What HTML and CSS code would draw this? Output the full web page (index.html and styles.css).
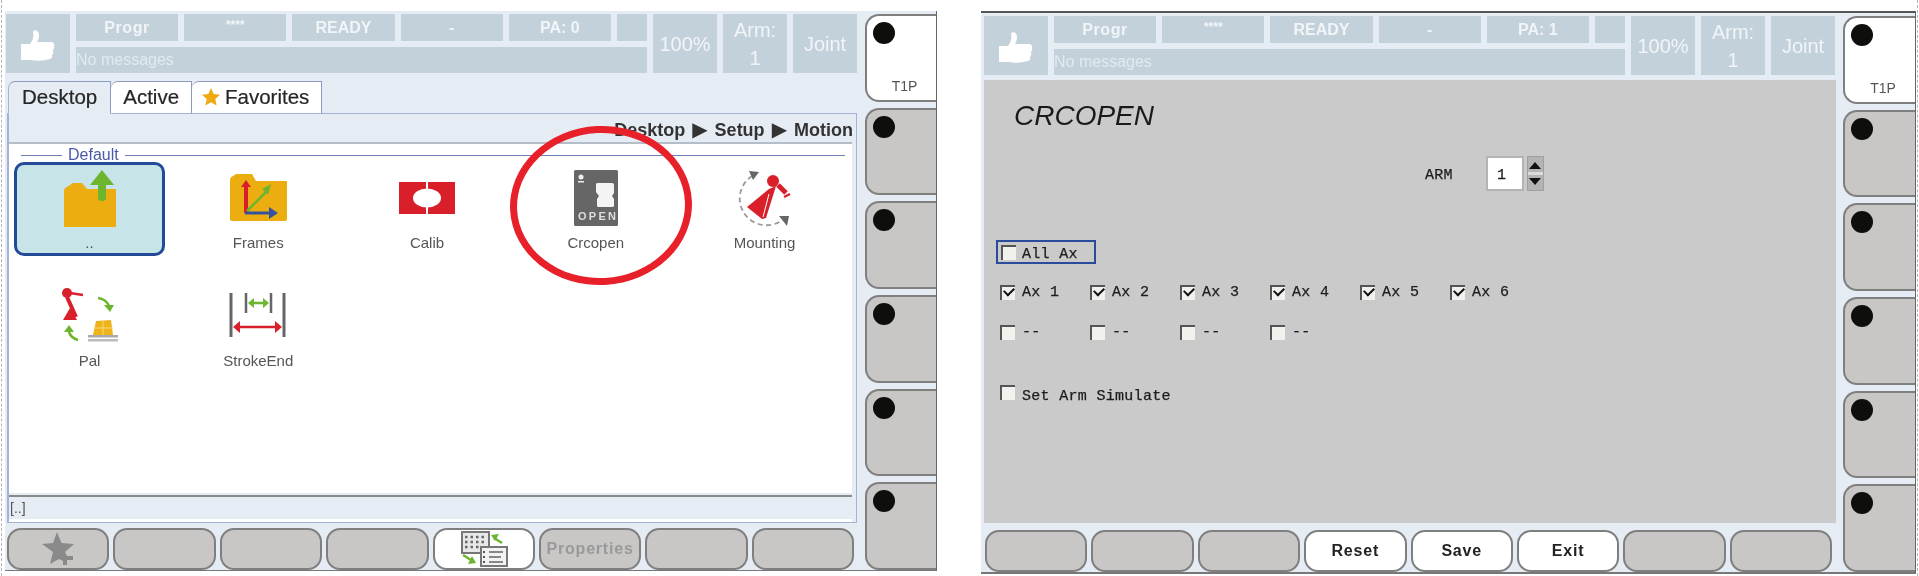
FILE: index.html
```html
<!DOCTYPE html>
<html lang="en">
<head>
  <meta charset="UTF-8" />
  <meta name="viewport" content="width=device-width, initial-scale=1" />
  <title>Teach pendant screens</title>
  <link rel="stylesheet" href="styles.css">
</head>
<body>

  <!-- desktop screen -->
  <div class="panel panel-desktop">
    <div class="main">
      <div class="status">
        <div class="cell thumb">
          <svg width="34" height="32" viewBox="0 0 34 32"><path fill="#fff" d="M0 14H9C12 10 13 6 12 2C13-1 18 0 18 5C18 8 17 10 16 12H31Q34 13 33 16Q34 18 32 20Q33 23 31 25Q32 28 29 29Q20 32 10 30H0Z"/></svg>
        </div>
        <div class="status-mid">
          <div class="cell small spaced">Progr</div>
          <div class="cell small stars">****</div>
          <div class="cell small">READY</div>
          <div class="cell small">-</div>
          <div class="cell small">PA: 0</div>
          <div class="cell small"></div>
          <div class="cell message">No messages</div>
        </div>
        <div class="cell big">100%</div>
        <div class="cell big">Arm:<br>1</div>
        <div class="cell big">Joint</div>
      </div>

      <div class="tabs">
        <div class="tab tab-current">Desktop</div>
        <div class="tab">Active</div>
        <div class="tab tab-fav">
          <svg width="18" height="18" viewBox="0 0 18 18"><path fill="#efaa12" d="M9 0l2.7 6 6.3.7-4.7 4.3 1.3 6.5L9 14.2l-5.6 3.3L4.700 11 0 6.700 6.300 6z"/></svg>
          Favorites
        </div>
      </div>

      <div class="folder">
        <div class="crumb">Desktop <span class="crumb-sep">▶</span> Setup <span class="crumb-sep">▶</span> Motion</div>
        <div class="list">
          <div class="group-head"><span class="group-line short"></span><span>Default</span><span class="group-line"></span></div>
          <div class="icons">
            <div class="item item-selected">
              <svg width="60" height="60" viewBox="0 0 60 60">
                <path fill="#ebad10" d="M4 22Q4 19 7 18L13 14H22L27 20H56V58H4Z"/>
                <path fill="#6db52e" d="M42 1L54 16H46V29Q46 32 42 32Q38 32 38 29V16H30Z"/>
              </svg>
              <span>..</span>
            </div>
            <div class="item">
              <svg width="60" height="60" viewBox="0 0 60 60">
                <path fill="#ebad10" d="M2 11Q2 8 5 7L8 5H24L28 12H59V50Q59 52 57 52H4Q2 52 2 50Z"/>
                <path fill="#d9202a" d="M16 44V18H13L18 11L23 18H20V44Z"/>
                <path stroke="#6db52e" stroke-width="2.500" d="M19 42L38 23"/>
                <path fill="#6db52e" d="M34 20L43 15L40 26Z"/>
                <path stroke="#34539f" stroke-width="3" d="M17 44H42"/>
                <path fill="#34539f" d="M41 38L50 44L41 50Z"/>
              </svg>
              <span>Frames</span>
            </div>
            <div class="item">
              <svg width="60" height="60" viewBox="0 0 60 60">
                <rect x="2" y="13" width="56" height="32" fill="#d91f2a"/>
                <ellipse cx="30" cy="29" rx="14" ry="9.500" fill="#fff"/>
                <rect x="29" y="13" width="2" height="32" fill="#fff"/>
              </svg>
              <span>Calib</span>
            </div>
            <div class="item">
              <svg width="60" height="60" viewBox="0 0 60 60">
                <rect x="8" y="1" width="44" height="56" rx="1.500" fill="#666"/>
                <circle cx="15" cy="8" r="2.500" fill="#eee"/>
                <rect x="12" y="12" width="6" height="1.500" fill="#eee"/>
                <path fill="#f4f4f4" d="M30 15Q30 14 32 14H46Q48 14 48 16V24L46 27L48 30V37Q48 38 46 38H33Q31 38 31 37V30L33 27L30 23Z"/>
                <text x="12" y="51" textLength="38" class="open-label">OPEN</text>
              </svg>
              <span>Crcopen</span>
            </div>
            <div class="item">
              <svg width="60" height="60" viewBox="0 0 60 60">
                <path fill="none" stroke="#999" stroke-width="1.800" stroke-dasharray="5 3.500" d="M17 7A25 25 0 0 0 46 52"/>
                <path fill="#666" d="M14 2L24 3L18 11Z"/>
                <path fill="#666" d="M44 47L54 47L52 57Z"/>
                <path fill="#d91f2a" d="M34 20L12 38L27 50L31 49L41 17Z"/>
                <path stroke="#fff" stroke-width="1" d="M34 25L28 48"/>
                <circle cx="38" cy="12" r="6" fill="#d91f2a"/>
                <path stroke="#d91f2a" stroke-width="5" d="M43 16L51 24"/>
                <path stroke="#d91f2a" stroke-width="2" d="M49 28L55 25"/>
              </svg>
              <span>Mounting</span>
            </div>
            <div class="item">
              <svg width="60" height="60" viewBox="0 0 60 60">
                <g transform="translate(0 -2)">
                  <circle cx="7" cy="8" r="5" fill="#d91f2a"/>
                  <path stroke="#d91f2a" stroke-width="2.500" d="M10 8L23 10"/>
                  <path stroke="#d91f2a" stroke-width="4" d="M7 12L16 32"/>
                  <path fill="#d91f2a" d="M3 35H17L10 23Z"/>
                  <path fill="none" stroke="#6db52e" stroke-width="2.500" d="M38 13Q46 14 49 21"/>
                  <path fill="#6db52e" d="M44 20L54 20L50 27Z"/>
                  <path fill="none" stroke="#6db52e" stroke-width="2.500" d="M18 55Q11 53 9 47"/>
                  <path fill="#6db52e" d="M4 47L9 40L14 47Z"/>
                  <path fill="#eeb31a" d="M36 36L51 35L53 50H33Z"/>
                  <path stroke="#f7d97a" stroke-width="1" d="M34 43H53M43 35V50"/>
                  <rect x="28" y="50" width="30" height="2.500" fill="#aaa"/>
                  <rect x="28" y="54" width="30" height="2.500" fill="#bbb"/>
                </g>
              </svg>
              <span>Pal</span>
            </div>
            <div class="item">
              <svg width="60" height="60" viewBox="0 0 60 60">
                <g transform="translate(0 -2)">
                  <path stroke="#666" stroke-width="3" d="M3 8V52M56 8V52"/>
                  <path stroke="#666" stroke-width="2.500" d="M18 8V28M43 8V28"/>
                  <path stroke="#6db52e" stroke-width="2.500" d="M23 18H38"/>
                  <path fill="#6db52e" d="M20 18L26 13V23ZM41 18L35 13V23Z"/>
                  <path stroke="#d91f2a" stroke-width="2.500" d="M9 42H50"/>
                  <path fill="#d91f2a" d="M5 42L12 36V48ZM54 42L47 36V48Z"/>
                </g>
              </svg>
              <span>StrokeEnd</span>
            </div>
          </div>
        </div>
        <div class="folder-foot">[..]</div>
      </div>

      <div class="softkeys softkeys-desktop">
        <div class="key">
          <svg width="34" height="34" viewBox="0 0 34 34"><path fill="#8a8a8a" d="M16 0l4.500 11L33 12l-9 8 2 4h6v4h-6v5h-4v-4l-4-2-9 5 3-12L1 12l11-1z"/></svg>
        </div>
        <div class="key"></div>
        <div class="key"></div>
        <div class="key"></div>
        <div class="key key-on">
          <svg width="50" height="40" viewBox="0 0 50 40">
            <rect x="3" y="3" width="27" height="21" fill="#e8e8e8" stroke="#777" stroke-width="2"/>
            <path stroke="#666" stroke-width="2.500" stroke-dasharray="2.500 3" d="M6 8H28M6 13H28M6 18H20"/>
            <rect x="22" y="18" width="26" height="19" fill="#f2f2f2" stroke="#777" stroke-width="2"/>
            <path stroke="#666" stroke-width="1.500" d="M30 23H44M30 28H42M30 33H44"/>
            <path stroke="#555" stroke-width="2" stroke-dasharray="2 3" d="M25 22V36"/>
            <path stroke="#6db52e" stroke-width="2.500" fill="none" d="M43 14L35 9"/>
            <path fill="#6db52e" d="M32 6L40 5L36 12Z"/>
            <path stroke="#6db52e" stroke-width="2.500" fill="none" d="M4 26L12 31"/>
            <path fill="#6db52e" d="M17 34L9 35L13 27Z"/>
          </svg>
        </div>
        <div class="key key-dim">Properties</div>
        <div class="key"></div>
        <div class="key"></div>
      </div>
    </div>

    <div class="side">
      <div class="side-key side-on"><span class="lamp"></span><span class="side-text">T1P</span></div>
      <div class="side-key"><span class="lamp"></span></div>
      <div class="side-key"><span class="lamp"></span></div>
      <div class="side-key"><span class="lamp"></span></div>
      <div class="side-key"><span class="lamp"></span></div>
      <div class="side-key"><span class="lamp"></span></div>
    </div>

    <div class="ring"></div>
  </div>

  <!-- crcopen screen -->
  <div class="panel panel-form">
    <div class="main">
      <div class="status">
        <div class="cell thumb">
          <svg width="34" height="32" viewBox="0 0 34 32"><path fill="#fff" d="M0 14H9C12 10 13 6 12 2C13-1 18 0 18 5C18 8 17 10 16 12H31Q34 13 33 16Q34 18 32 20Q33 23 31 25Q32 28 29 29Q20 32 10 30H0Z"/></svg>
        </div>
        <div class="status-mid">
          <div class="cell small spaced">Progr</div>
          <div class="cell small stars">****</div>
          <div class="cell small">READY</div>
          <div class="cell small">-</div>
          <div class="cell small">PA: 1</div>
          <div class="cell small"></div>
          <div class="cell message">No messages</div>
        </div>
        <div class="cell big">100%</div>
        <div class="cell big">Arm:<br>1</div>
        <div class="cell big">Joint</div>
      </div>

      <div class="form">
        <h1>CRCOPEN</h1>
        <div class="arm-row">
          <span class="arm-label">ARM</span>
          <div class="spin-value">1</div>
          <div class="spin">
            <span class="spin-up"></span>
            <span class="spin-line"></span>
            <span class="spin-down"></span>
          </div>
        </div>
        <div class="all-ax"><span class="box"></span><span class="all-ax-text">All Ax</span></div>
        <div class="axes">
          <div class="axis"><span class="box box-on"></span>Ax 1</div>
          <div class="axis"><span class="box box-on"></span>Ax 2</div>
          <div class="axis"><span class="box box-on"></span>Ax 3</div>
          <div class="axis"><span class="box box-on"></span>Ax 4</div>
          <div class="axis"><span class="box box-on"></span>Ax 5</div>
          <div class="axis"><span class="box box-on"></span>Ax 6</div>
          <div class="axis"><span class="box"></span>--</div>
          <div class="axis"><span class="box"></span>--</div>
          <div class="axis"><span class="box"></span>--</div>
          <div class="axis"><span class="box"></span>--</div>
        </div>
        <div class="simulate"><span class="box"></span><span class="simulate-text">Set Arm Simulate</span></div>
      </div>

      <div class="softkeys softkeys-form">
        <div class="key"></div>
        <div class="key"></div>
        <div class="key"></div>
        <div class="key key-on">Reset</div>
        <div class="key key-on">Save</div>
        <div class="key key-on">Exit</div>
        <div class="key"></div>
        <div class="key"></div>
      </div>
    </div>

    <div class="side">
      <div class="side-key side-on"><span class="lamp"></span><span class="side-text">T1P</span></div>
      <div class="side-key"><span class="lamp"></span></div>
      <div class="side-key"><span class="lamp"></span></div>
      <div class="side-key"><span class="lamp"></span></div>
      <div class="side-key"><span class="lamp"></span></div>
      <div class="side-key"><span class="lamp"></span></div>
    </div>
  </div>

</body>
</html>
```

FILE: styles.css
```css
* {
  box-sizing: border-box;
}

html {
  background: #fff;
}

body {
  margin: 0 1px;
  height: 576px;
  overflow: hidden;
  padding: 11px 1px 0 3px;
  display: flex;
  justify-content: space-between;
  align-items: flex-start;
  border-left: 1px dashed #b5b5b5;
  border-right: 1px dashed #b5b5b5;
  font-family: "Liberation Sans", Arial, sans-serif;
  background: #fff;
}

.panel {
  position: relative;
  display: grid;
  background: #e6ecf4;
  filter: blur(0.45px);
}

.panel-desktop {
  width: 932px;
  height: 560px;
  padding: 3px 0 0 1px;
  grid-template-columns: 852px 71px;
  column-gap: 7px;
  border-right: 1px solid #666;
  border-bottom: 1px solid #777;
}

.panel-form {
  width: 935px;
  height: 563px;
  padding: 3px 0 0 3px;
  grid-template-columns: 852px 72px;
  column-gap: 7px;
  border-top: 2px solid #555;
  border-right: 1px solid #666;
  border-bottom: 2px solid #777;
}

.main {
  display: flex;
  flex-direction: column;
  min-width: 0;
}

/* status bar */
.status {
  height: 59px;
  display: grid;
  grid-template-columns: 64px 571px 64px 64px 64px;
  column-gap: 6px;
}

.cell {
  background: #c3d1db;
  color: #f1f5f8;
  display: flex;
  align-items: center;
  justify-content: center;
  text-align: center;
}

.thumb {
  padding-top: 5px;
}

.status-mid {
  display: grid;
  grid-template-columns: repeat(5, 1fr) 30px;
  grid-template-rows: 27px 26px;
  gap: 6px;
}

.small {
  font-size: 16px;
  font-weight: bold;
}

.spaced {
  letter-spacing: 0.6px;
}

.stars {
  font-size: 12px;
  padding-bottom: 5px;
}

.message {
  grid-column: 1 / -1;
  justify-content: flex-start;
  font-size: 16px;
  font-weight: normal;
  color: #e2eaef;
}

.big {
  font-size: 20px;
  line-height: 28px;
}

/* tabs */
.tabs {
  display: flex;
  height: 33px;
  margin: 8px 0 -1px 2px;
  position: relative;
  z-index: 1;
}

.tab {
  background: #fff;
  color: #262626;
  font-size: 20.5px;
  -webkit-text-stroke: 0.2px #262626;
  padding: 0 12px 2px;
  display: flex;
  align-items: center;
  border-top: 1px solid #8d9cc0;
  border-right: 1px solid #8d9cc0;
  border-bottom: 1px solid #a3b2d6;
  border-top-left-radius: 7px;
}

.tab-current {
  background: #e6ecf4;
  padding: 0 13px 2px;
  border-left: 1px solid #a3b2d6;
  border-bottom: 1px solid #e6ecf4;
}

.tab-fav {
  gap: 5px;
  padding-left: 10px;
}

/* file browser */
.folder {
  height: 410px;
  margin: 0 1px;
  display: flex;
  flex-direction: column;
  border: 1px solid #a3b2d6;
  border-left-width: 2px;
  padding-right: 4px;
}

.crumb {
  height: 28px;
  margin-right: -1px;
  text-align: right;
  white-space: nowrap;
  font-size: 18px;
  font-weight: bold;
  word-spacing: 2px;
  line-height: 32px;
  color: #333;
}

.crumb-sep {
  font-family: "DejaVu Sans", sans-serif;
  font-weight: normal;
  font-size: 20px;
  line-height: 20px;
}

.list {
  flex: 1;
  background: #fff;
  border-top: 2px solid #b4bec8;
  padding-top: 2px;
  margin-bottom: 2px;
}

.group-head {
  display: flex;
  align-items: center;
  gap: 6px;
  height: 18px;
  margin: 0 7px 0 12px;
  color: #4a5aa6;
  font-size: 16px;
}

.group-line {
  flex: 1;
  height: 1px;
  background: #6e80b8;
}

.group-line.short {
  flex: none;
  width: 41px;
}

.icons {
  display: grid;
  grid-template-columns: repeat(5, 151px);
  grid-auto-rows: 94px;
  column-gap: 17.75px;
  row-gap: 24px;
  margin: -2px 0 0 5px;
}

.item {
  display: flex;
  flex-direction: column;
  align-items: center;
  padding-top: 7px;
  gap: 5px;
  color: #555;
  font-size: 15px;
  line-height: 18px;
}

.item-selected {
  background: #c7e4e8;
  border: 3px solid #234a96;
  border-radius: 10px;
  padding-top: 4px;
  gap: 5px;
}

.open-label {
  font-family: "Liberation Sans", sans-serif;
  font-size: 11px;
  font-weight: bold;
  fill: #ddd;
}

.folder-foot {
  height: 27px;
  border-top: 2px solid #8a8a8a;
  border-bottom: 3px solid #fff;
  color: #555;
  font-size: 14px;
  line-height: 22px;
  padding-left: 1px;
}

/* soft keys */
.softkeys {
  height: 42px;
  display: flex;
  gap: 4px;
  padding: 0 4px 0 1px;
}

.softkeys-desktop {
  margin-top: 5px;
}

.softkeys-form {
  margin-top: 7px;
}

.key {
  flex: 1;
  min-width: 0;
  background: #c9c7c5;
  border: 2px solid #7f7f7f;
  border-radius: 14px;
  display: flex;
  align-items: center;
  justify-content: center;
  font-size: 16px;
  font-weight: bold;
  letter-spacing: 0.8px;
  color: #222;
}

.key-on {
  background: #fff;
}

.key-dim {
  color: #999;
}

.side {
  display: flex;
  flex-direction: column;
  gap: 6px;
}

.side-key {
  flex: 1;
  background: #c9c7c5;
  border: 2px solid #7f7f7f;
  border-right: none;
  border-radius: 14px 0 0 14px;
  padding: 6px 0 0 6px;
  display: flex;
  flex-direction: column;
  justify-content: space-between;
}

.side-on {
  background: #fff;
}

.lamp {
  width: 22px;
  height: 22px;
  border-radius: 50%;
  background: #0e0e0c;
}

.side-text {
  align-self: center;
  font-size: 14px;
  line-height: 16px;
  color: #555;
  margin-bottom: 6px;
}

/* the red mark drawn over the desktop */
.ring {
  position: absolute;
  left: 505px;
  top: 115px;
  width: 182px;
  height: 159px;
  border: 7px solid #e8202a;
  border-radius: 50%;
  z-index: 2;
  transform: rotate(-3deg);
}

/* crcopen form */
.form {
  height: 443px;
  margin-top: 5px;
  background: #cacaca;
  padding: 21px 12px 0;
  font-family: "Liberation Mono", "Courier New", monospace;
  font-size: 15px;
  letter-spacing: 0.3px;
  color: #1c1c1c;
  -webkit-text-stroke: 0.25px #1c1c1c;
}

.form h1 {
  margin: 0 0 0 18px;
  height: 30px;
  font-family: "Liberation Sans", Arial, sans-serif;
  font-size: 28px;
  font-style: italic;
  font-weight: normal;
  line-height: 30px;
  letter-spacing: 0;
  color: #1a1a1a;
  -webkit-text-stroke: 0;
}

.arm-row {
  display: flex;
  align-items: center;
  height: 35px;
  margin: 25px 0 0 429px;
}

.arm-label {
  padding-top: 3px;
}

.spin-value {
  width: 38px;
  height: 35px;
  margin-left: 33px;
  background: #fff;
  border: 2px solid #b4b4b4;
  padding: 2px 0 0 9px;
  line-height: 31px;
}

.spin {
  width: 17px;
  height: 35px;
  margin-left: 3px;
  background: #b4b4b4;
  border: 1px solid #a0a0a0;
  display: flex;
  flex-direction: column;
  align-items: center;
  justify-content: space-between;
  padding: 5px 0;
}

.spin-up,
.spin-down {
  width: 0;
  height: 0;
  border-left: 6px solid transparent;
  border-right: 6px solid transparent;
}

.spin-up {
  border-bottom: 7px solid #111;
}

.spin-down {
  border-top: 7px solid #111;
}

.spin-line {
  width: 100%;
  height: 3px;
  background: #dcdcdc;
}

.box {
  flex: none;
  position: relative;
  width: 15px;
  height: 15px;
  background: #f1f1ed;
  border-top: 2px solid #555;
  border-left: 2px solid #555;
}

.box-on::after {
  content: "";
  position: absolute;
  left: 2px;
  top: 0;
  width: 8px;
  height: 5px;
  border-left: 2px solid #111;
  border-bottom: 2px solid #111;
  transform: rotate(-45deg);
}

.all-ax {
  display: flex;
  align-items: center;
  gap: 6px;
  width: 100px;
  height: 24px;
  margin-top: 49px;
  padding-left: 3px;
  border: 2px solid #2b4a9c;
}

.all-ax-text {
  padding-top: 4px;
}

.axes {
  display: grid;
  grid-template-columns: repeat(6, 90px);
  grid-auto-rows: 15px;
  row-gap: 25px;
  margin: 21px 0 0 4px;
}

.axis {
  display: flex;
  align-items: center;
  gap: 7px;
  white-space: pre;
}

.simulate {
  display: flex;
  align-items: flex-start;
  gap: 7px;
  margin: 45px 0 0 4px;
}

.simulate-text {
  padding-top: 3px;
}
```
